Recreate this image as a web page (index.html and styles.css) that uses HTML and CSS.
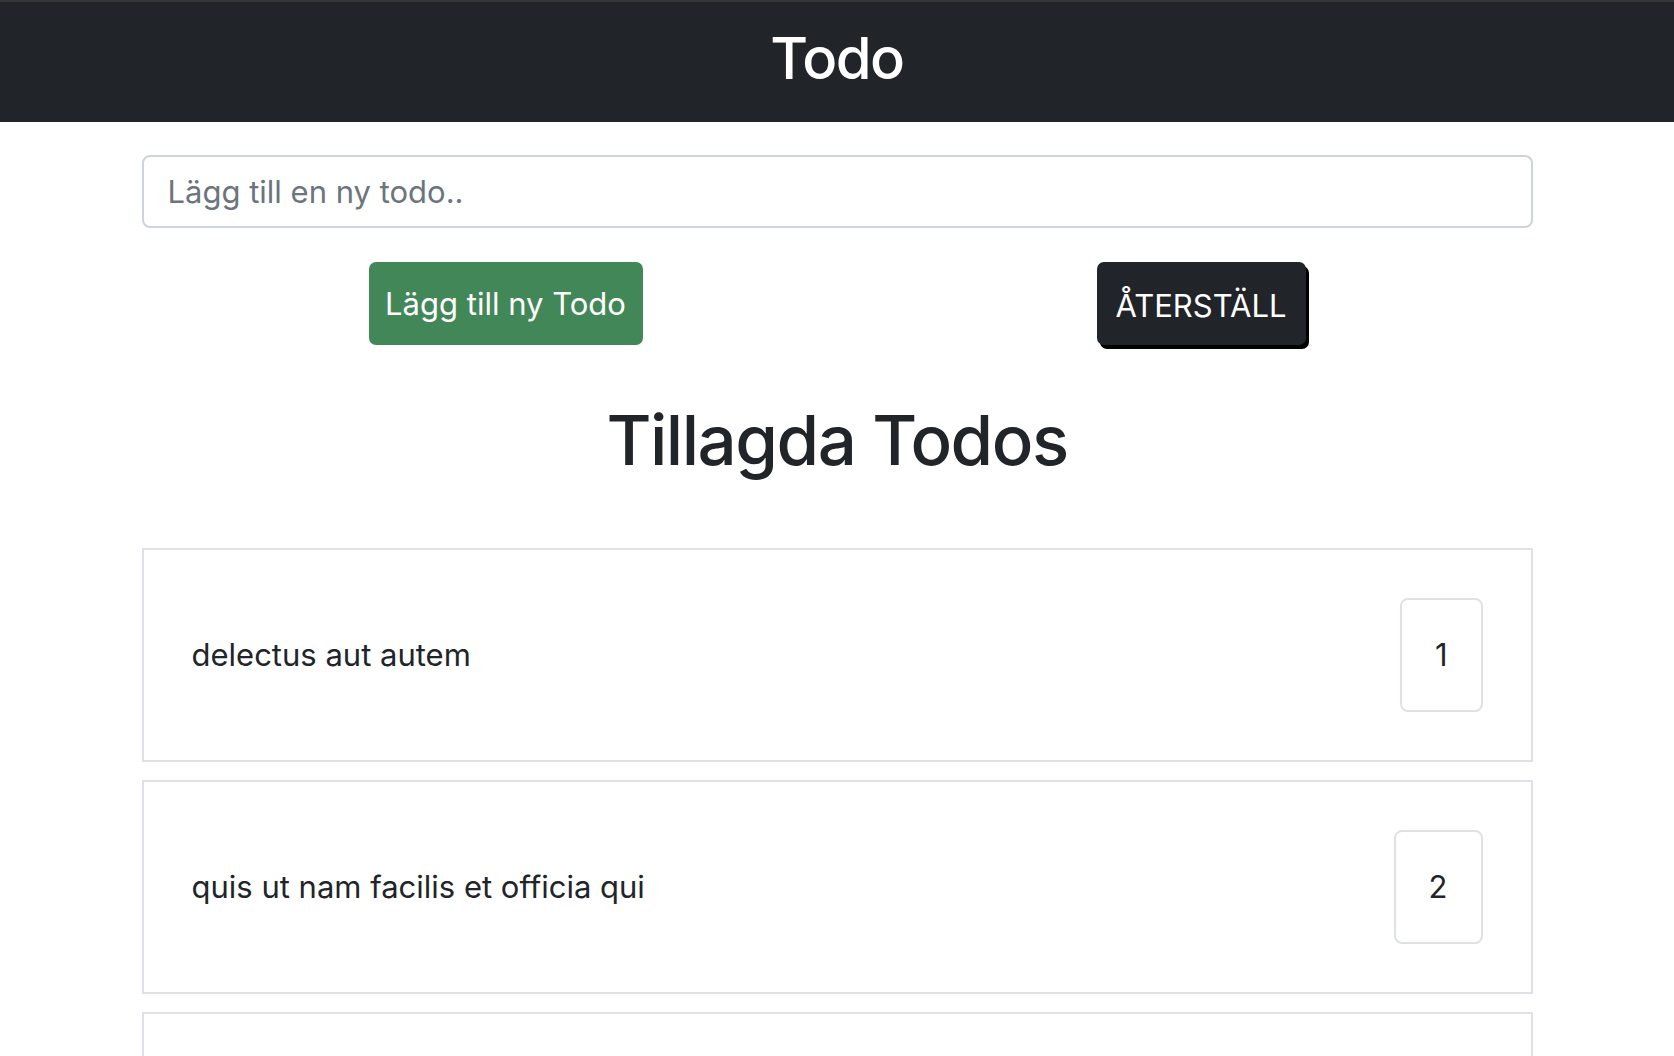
FILE: index.html
```html
<!DOCTYPE html>
<html lang="sv">
<head>
<meta charset="utf-8">
<title>Todo</title>
<link rel="stylesheet" href="styles.css">
</head>
<body>
<header class="navbar">
  <h1 class="brand">Todo</h1>
</header>
<main class="container">
  <input class="todo-input" type="text" placeholder="Lägg till en ny todo..">
  <div class="actions">
    <button class="btn btn-add">Lägg till ny Todo</button>
    <button class="btn btn-reset">ÅTERSTÄLL</button>
  </div>
  <h2 class="section-title">Tillagda Todos</h2>
  <ul class="todo-list">
    <li class="todo-item"><span class="todo-text">delectus aut autem</span><span class="todo-num">1</span></li>
    <li class="todo-item"><span class="todo-text">quis ut nam facilis et officia qui</span><span class="todo-num">2</span></li>
    <li class="todo-item"></li>
  </ul>
</main>
</body>
</html>
```
FILE: styles.css
```css
* { box-sizing: border-box; }
html, body { margin: 0; padding: 0; }
body {
  font-family: Inter, "Noto Sans", "Liberation Sans", sans-serif;
  color: #212529;
  background: #fff;
  height: 1056px;
  overflow: hidden;
}
.navbar {
  background: #212529;
  border-top: 2px solid #363636;
  height: 122px;
  display: flex;
  align-items: center;
  justify-content: center;
}
.brand {
  margin: 0;
  color: #fff;
  font-size: 58px;
  font-weight: 500;
  letter-spacing: -1.5px;
  line-height: 1;
  padding-bottom: 8px;
}
.container {
  width: 1391px;
  margin: 0 auto;
  padding-top: 33px;
}
.todo-input {
  display: block;
  width: 100%;
  height: 73px;
  border: 2px solid #ced4da;
  border-radius: 8px;
  padding: 0 24px;
  font-family: inherit;
  font-size: 31px;
  color: #212529;
  outline: none;
}
.todo-input::placeholder { color: #6c757d; }
.actions {
  display: flex;
  justify-content: space-around;
  align-items: flex-start;
  margin-top: 34px;
}
.btn {
  font-family: inherit;
  font-size: 31px;
  border: none;
  border-radius: 7px;
  color: #fff;
  height: 83px;
  cursor: pointer;
}
.btn-add {
  background: #428758;
  width: 274px;
  padding: 0 12px;
}
.btn-reset {
  background: #212529;
  width: 209px;
  padding: 4px 12px 0;
  box-shadow: 3px 4px 0 #000;
}
.section-title {
  margin: 54px 0 0;
  text-align: center;
  font-size: 69px;
  font-weight: 500;
  letter-spacing: -1.5px;
  line-height: 1.2;
}
.todo-list {
  list-style: none;
  margin: 66px 0 0;
  padding: 0;
  display: flex;
  flex-direction: column;
  gap: 18px;
}
.todo-item {
  border: 2px solid #dee2e6;
  padding: 48px;
  display: flex;
  align-items: center;
  justify-content: space-between;
  min-height: 214px;
}
.todo-text {
  font-size: 31px;
}
.todo-num {
  border: 2px solid #dee2e6;
  border-radius: 8px;
  font-size: 31px;
  padding: 0 33px;
  height: 114px;
  display: flex;
  align-items: center;
}
```
